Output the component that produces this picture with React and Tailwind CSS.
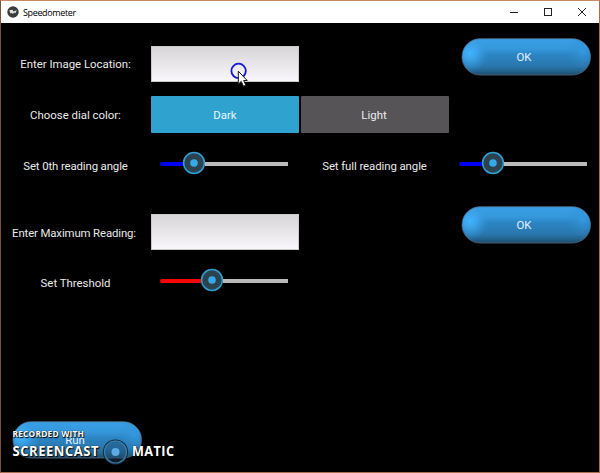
import React from "react";

function Label({ children, className = "" }) {
  return (
    <div className={`flex items-center justify-center whitespace-nowrap text-[11.4px] leading-[16px] text-[#e9e9e9] ${className}`}>
      <span>{children}</span>
    </div>
  );
}

function TextField({ children }) {
  return (
    <div className="ml-px h-[36px] w-[148px] border border-[#c9c8ca] bg-linear-to-b from-[#d7d5d7] via-[#e8e6e8] to-[#f9f7fb]">
      {children}
    </div>
  );
}

function Slider({ color, value }) {
  return (
    <div className="ml-[10px] flex h-[24px] w-[128px] items-center">
      <div className={`mt-px h-[4px] rounded-l-full ${color}`} style={{ width: value - 11 }} />
      <svg className="size-[24px] shrink-0 -mx-px" viewBox="0 0 24 24">
        <circle cx="12" cy="12" r="10.4" fill="#2c434f" stroke="#2f9fd0" strokeWidth="1.5" />
        <circle cx="12" cy="12" r="3.8" fill="#36aae6" />
      </svg>
      <div className="mt-px h-[4px] flex-1 bg-[#b9bab9]" />
    </div>
  );
}

function PillButton({ id, children }) {
  return (
    <button className="relative block h-[38px] w-[131px] text-[11.4px] text-[#e4f3fd]">
      <svg className="block h-[38px] w-[131px]" viewBox="0 0 131 38">
        <defs>
          <linearGradient id={`${id}-body`} x1="0" y1="0" x2="0" y2="1">
            <stop offset="0" stopColor="#399fe6" />
            <stop offset="0.28" stopColor="#3598dc" />
            <stop offset="0.45" stopColor="#2c84c2" />
            <stop offset="0.75" stopColor="#2977ae" />
            <stop offset="0.88" stopColor="#246690" />
            <stop offset="1" stopColor="#1b4a6b" />
          </linearGradient>
          <radialGradient id={`${id}-left`} cx="9" cy="15" r="19" gradientUnits="userSpaceOnUse">
            <stop offset="0" stopColor="#41b4fc" />
            <stop offset="0.35" stopColor="#3da9f2" stopOpacity="0.85" />
            <stop offset="1" stopColor="#3598dc" stopOpacity="0" />
          </radialGradient>
          <radialGradient id={`${id}-right`} cx="122" cy="14" r="17" gradientUnits="userSpaceOnUse">
            <stop offset="0" stopColor="#359be5" stopOpacity="0.8" />
            <stop offset="1" stopColor="#2f88c7" stopOpacity="0" />
          </radialGradient>
        </defs>
        <rect x="1" y="0.7" width="128.5" height="36.3" rx="18.1" fill={`url(#${id}-body)`} stroke="#536b82" strokeWidth="0.8" />
        <rect x="1.5" y="1" width="127.5" height="35.6" rx="17.8" fill={`url(#${id}-left)`} />
        <rect x="1.5" y="1" width="127.5" height="35.6" rx="17.8" fill={`url(#${id}-right)`} />
      </svg>
      <span className="absolute inset-0 flex items-center justify-center pr-[5px] pt-[2px]">{children}</span>
    </button>
  );
}

function Pointer() {
  return (
    <svg className="ml-[78px] mt-[14px] block h-[30px] w-[20px] overflow-visible" viewBox="0 0 20 30">
      <circle cx="8.6" cy="9.9" r="7.2" fill="none" stroke="#1418d6" strokeWidth="1.8" />
      <path d="M8.3 10.2V23.2L11.2 20.4L13.5 25.3L15.9 24.2L13.6 19.5H17.2Z" fill="#fff" stroke="#161616" strokeWidth="1" />
    </svg>
  );
}

function Watermark() {
  return (
    <div className="absolute left-[11px] top-[406px] font-['Open_Sans','Noto_Sans',sans-serif] font-bold text-white [text-shadow:1px_1px_1px_#000,0_0_1px_#000]">
      <svg className="absolute left-[90px] top-[9px] size-[28px]" viewBox="0 0 28 28">
        <circle cx="13.5" cy="14" r="12" fill="#1d4a6d" fillOpacity="0.4" stroke="#122c40" strokeWidth="1.2" />
        <circle cx="13.5" cy="14" r="11" fill="none" stroke="#3d7ba5" strokeWidth="1.2" />
        <circle cx="13.5" cy="14" r="4" fill="#5cabe8" />
      </svg>
      <svg className="block h-[10px] w-[75px] overflow-visible">
        <text x="0.5" y="8" textLength="71.5" lengthAdjust="spacingAndGlyphs" letterSpacing="0.2" fontSize="9" fill="#fff">RECORDED WITH</text>
      </svg>
      <svg className="block h-[18px] w-[164px] overflow-visible">
        <text x="0.5" y="17" textLength="86.5" lengthAdjust="spacingAndGlyphs" letterSpacing="0.5" fontSize="13.4" fill="#fff">SCREENCAST</text>
        <text x="120" y="17" textLength="42.5" lengthAdjust="spacingAndGlyphs" letterSpacing="0.5" fontSize="13.4" fill="#fff">MATIC</text>
      </svg>
    </div>
  );
}

function TitleBar() {
  return (
    <header className="flex h-[22px] items-center bg-white text-[#222]">
      <svg className="ml-[6px] size-[12px]" viewBox="0 0 12 12">
        <circle cx="6" cy="6" r="5.7" fill="#3c3c3c" />
        <path d="M2.2 4.3L5.8 3.8L6.1 5.4L9.7 4.3L8.5 7.3L7.3 6.4L5.8 8L4.8 6.8L3.7 7.7Z" fill="#e4e4e4" />
      </svg>
      <h1 className="ml-[4px] font-['Open_Sans','Noto_Sans',sans-serif] text-[9px] leading-none tracking-[-0.36px] text-black">Speedometer</h1>
      <svg className="ml-auto mr-[11px] h-[10px] w-[78px]" viewBox="0 0 78 10" fill="none" stroke="#222" strokeWidth="1">
        <path d="M0 5.5H8" />
        <rect x="34.5" y="1.5" width="7" height="7" />
        <path d="M68 1L76 9M76 1L68 9" />
      </svg>
    </header>
  );
}

const ROW = "grid grid-cols-[149px_150px_149px_150px]";

export default function App() {
  return (
    <div className="h-[473px] w-[600px] overflow-hidden border border-[#a86f4e] border-t-[#cb8b68] border-l-[#795337] bg-black font-[Roboto,sans-serif]">
      <TitleBar />
      <main className="relative h-[449px] pt-[15px]">
        <div className={`${ROW} h-[58px]`}>
          <Label className="h-[52px]">Enter Image Location:</Label>
          <div className="pt-[8px]"><TextField><Pointer /></TextField></div>
          <div />
          <div className="pl-[12px]"><PillButton id="image-ok">OK</PillButton></div>
        </div>
        <div className={`${ROW} h-[55px]`}>
          <Label className="h-[38px]">Choose dial color:</Label>
          <button className="ml-px h-[37px] w-[148px] rounded-[1px] bg-[#30a2cf] pt-[2px] text-[11.4px] text-[#e6f5fb]">Dark</button>
          <button className="ml-px h-[37px] w-[148px] rounded-[1px] bg-[#565457] pt-[2px] pr-[2px] text-[11.4px] text-[#ececec]">Light</button>
        </div>
        <div className={`${ROW} h-[55px]`}>
          <Label className="h-[30px] tracking-[-0.12px]">Set 0th reading angle</Label>
          <Slider color="bg-[#0000f5]" value={34} />
          <Label className="h-[30px] tracking-[-0.08px]">Set full reading angle</Label>
          <Slider color="bg-[#0000f5]" value={34} />
        </div>
        <div className={`${ROW} h-[62px]`}>
          <Label className="h-[54px] pr-[3px] tracking-[-0.13px]">Enter Maximum Reading:</Label>
          <div className="pt-[8px]"><TextField /></div>
          <div />
          <div className="pl-[12px]"><PillButton id="maximum-ok">OK</PillButton></div>
        </div>
        <div className={`${ROW} h-[153px]`}>
          <Label className="h-[30px]">Set Threshold</Label>
          <Slider color="bg-[#f60505]" value={51.5} />
        </div>
        <div className="pl-[11px]"><PillButton id="run">Run</PillButton></div>
        <Watermark />
      </main>
    </div>
  );
}
